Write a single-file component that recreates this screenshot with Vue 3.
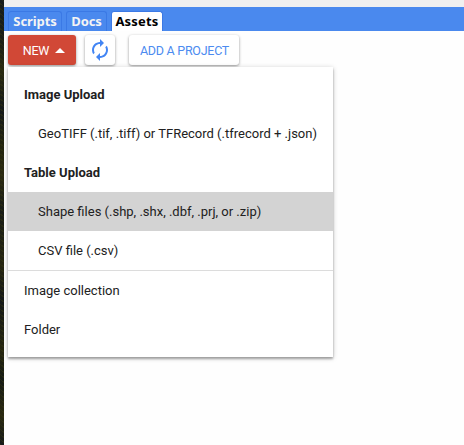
<script setup>
const tabs = [
  { label: 'Scripts', cls: 'scripts' },
  { label: 'Docs', cls: 'docs' },
  { label: 'Assets', cls: 'assets active' },
]
const items = [
  { label: 'Image Upload', cls: 'heading' },
  { label: 'GeoTIFF (.tif, .tiff) or TFRecord (.tfrecord + .json)', cls: 'nested' },
  { label: 'Table Upload', cls: 'heading' },
  { label: 'Shape files (.shp, .shx, .dbf, .prj, or .zip)', cls: 'nested hovered' },
  { label: 'CSV file (.csv)', cls: 'nested' },
  { label: 'Image collection', cls: 'separated' },
  { label: 'Folder', cls: '' },
]
</script>

<template>
  <div class="window">
    <div class="backdrop"></div>
    <main class="panel">
      <div class="topbar"></div>
      <nav class="tabs">
        <div v-for="t in tabs" :key="t.label" class="tab" :class="t.cls"><span>{{ t.label }}</span></div>
      </nav>
      <div class="toolbar">
        <button class="btn new">
          <span class="caption">NEW</span>
          <svg width="10" height="5" viewBox="0 0 10 5"><path d="M0 5L5 0L10 5Z" fill="#fff" /></svg>
        </button>
        <button class="btn refresh" aria-label="Refresh">
          <svg width="24" height="24" viewBox="0 0 24 24">
            <path fill="#4285f4" d="M12 6v3l4-4-4-4v3c-4.420 0-8 3.580-8 8 0 1.570.46 3.030 1.240 4.260L6.700 14.800C6.250 13.970 6 13.010 6 12c0-3.310 2.690-6 6-6zm6.760 1.740L17.300 9.200c.44.84.7 1.790.7 2.800 0 3.310-2.690 6-6 6v-3l-4 4 4 4v-3c4.420 0 8-3.580 8-8 0-1.570-.46-3.030-1.240-4.260z" />
          </svg>
        </button>
        <button class="btn project"><span class="caption">ADD A PROJECT</span></button>
      </div>
      <div class="menu">
        <div v-for="i in items" :key="i.label" class="item" :class="i.cls">{{ i.label }}</div>
      </div>
    </main>
  </div>
</template>

<style>
body { margin: 0; overflow: hidden; }
</style>

<style scoped>
.window {
  display: flex;
  width: 464px;
  height: 445px;
  background: #fefefe;
  font-family: Roboto, sans-serif;
  font-size: 13px;
  color: #212121;
}
.backdrop {
  width: 4px;
  flex: none;
  background:
    repeating-linear-gradient(37deg, rgba(58, 58, 15, 0.45) 0 1px, transparent 1px 4px),
    linear-gradient(#151b1d 0, #1c2017 45px, #292911 70px, #15191a 110px, #22240f 145px, #2b2a12 175px, #191d18 210px, #252511 265px, #15191a 300px, #25250f 350px, #161b16 380px, #292811 415px, #161a1a 445px);
}
.panel { position: relative; flex: 1; min-width: 0; }
.topbar { height: 7px; background: #f0f0f0; }
.tabs {
  display: flex;
  align-items: flex-end;
  gap: 4px;
  height: 24px;
  padding-left: 4px;
  box-sizing: border-box;
  background: #4a89ee;
}
.tab {
  display: flex;
  justify-content: center;
  box-sizing: border-box;
  height: 20px;
  border: 1px solid #3b79e5;
  border-bottom: 0;
  border-radius: 3px 3px 0 0;
  font: bold 13px/19px "Noto Sans", "Open Sans", sans-serif;
  color: #f4f4f4;
  white-space: nowrap;
}
.scripts { width: 54px; letter-spacing: -0.1px; }
.docs { width: 41px; letter-spacing: -0.1px; }
.assets { width: 52px; letter-spacing: 0.2px; }
.active { background: #fff; color: #000; }
.toolbar {
  display: flex;
  align-items: flex-start;
  padding: 4px 0 0 4px;
}
.btn {
  display: flex;
  align-items: center;
  justify-content: center;
  box-sizing: border-box;
  height: 30px;
  padding: 0;
  border: 0;
  border-radius: 3px;
  background: #fff;
  box-shadow: 0 1px 3px rgba(0, 0, 0, 0.42);
  font: 12.5px Roboto, sans-serif;
  letter-spacing: -0.26px;
  color: #4c8bf0;
}
.caption { padding-top: 1px; }
.new { width: 68px; gap: 6px; padding-left: 4px; background: #d14836; color: #fff; }
.refresh { width: 30px; margin-left: 9px; }
.project { width: 110px; margin-left: 14px; padding-left: 1px; }
.menu {
  position: absolute;
  left: 4px;
  top: 67px;
  width: 325px;
  height: 290px;
  box-sizing: border-box;
  padding: 8px 0;
  background: #fff;
  box-shadow: 0 2px 2px rgba(0, 0, 0, 0.28), 0 1px 5px rgba(0, 0, 0, 0.22);
}
.item { height: 39px; padding-left: 16px; line-height: 39px; white-space: nowrap; }
.heading { font-weight: bold; }
.nested { padding-left: 30px; }
.hovered { background: #d3d3d3; }
.separated { border-top: 1px solid #dcdcdc; }
</style>
